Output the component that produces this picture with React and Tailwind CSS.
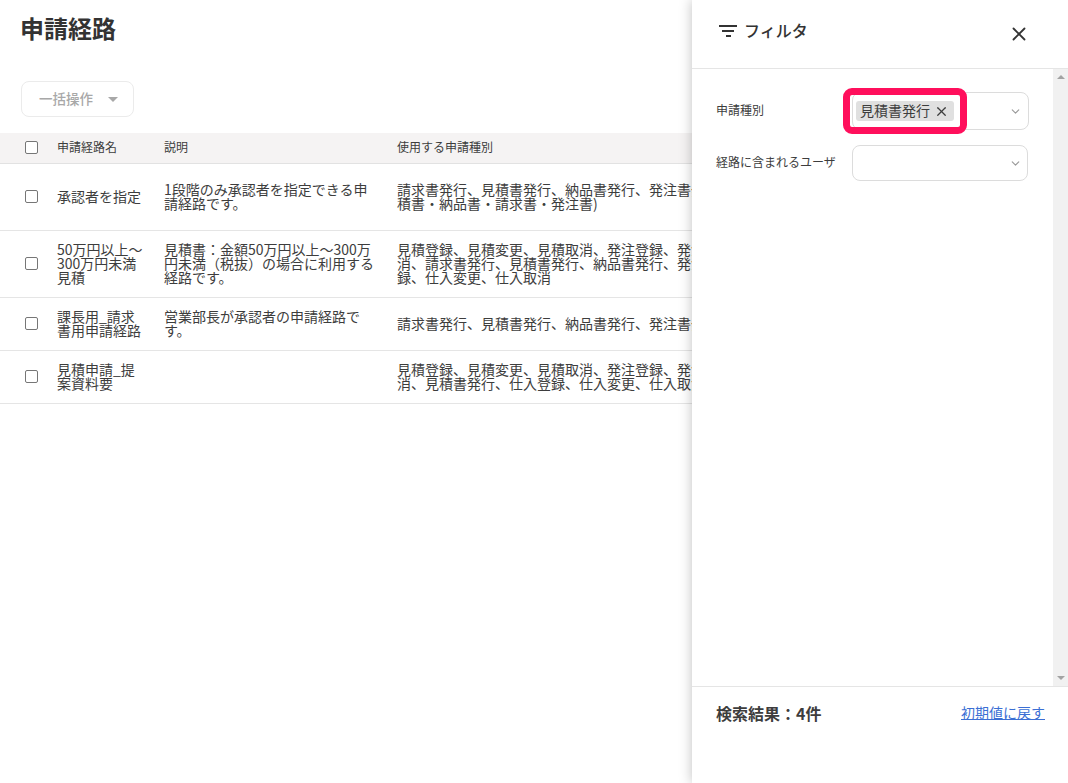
import React from 'react'
import { X, ChevronDown } from 'lucide-react'

const rows = [
  {
    h: 'h-[67px]',
    name: ['承認者を指定'],
    desc: ['1段階のみ承認者を指定できる申', '請経路です。'],
    types: ['請求書発行、見積書発行、納品書発行、発注書発行(見', '積書・納品書・請求書・発注書)'],
  },
  {
    h: 'h-[67px]',
    name: ['50万円以上～', '300万円未満', '見積'],
    desc: ['見積書：金額50万円以上～300万', '円未満（税抜）の場合に利用する', '経路です。'],
    types: ['見積登録、見積変更、見積取消、発注登録、発注変更、発注取', '消、請求書発行、見積書発行、納品書発行、発注書発行、仕入登', '録、仕入変更、仕入取消'],
  },
  {
    h: 'h-[53px]',
    name: ['課長用_請求', '書用申請経路'],
    desc: ['営業部長が承認者の申請経路で', 'す。'],
    types: ['請求書発行、見積書発行、納品書発行、発注書発行'],
  },
  {
    h: 'h-[53px]',
    name: ['見積申請_提', '案資料要'],
    desc: [],
    types: ['見積登録、見積変更、見積取消、発注登録、発注変更、発注取', '消、見積書発行、仕入登録、仕入変更、仕入取消'],
  },
]

function Lines({ lines }) {
  return lines.map((l, i) => <div key={i} className="whitespace-nowrap">{l}</div>)
}

function Checkbox() {
  return <span className="block w-[13px] h-[13px] rounded-[2px] border border-[#767676] bg-white" />
}

function FilterIcon() {
  return (
    <svg width="18" height="12" viewBox="0 0 18 12" fill="#333">
      <rect x="0" y="0" width="18" height="2" />
      <rect x="3" y="5" width="12" height="2" />
      <rect x="7" y="10" width="5" height="2" />
    </svg>
  )
}

export default function App() {
  return (
    <div className="relative h-[783px] w-full overflow-hidden bg-white text-[#3d3d3d] font-['Noto_Sans_CJK_JP','Noto_Sans',sans-serif]">
      <h1 className="pl-[20px] pt-[10px] h-[81px] text-[24px] leading-[36px] font-bold text-[#333]">申請経路</h1>

      <div className="pl-[21px] h-[52px]">
        <button className="flex items-center w-[113px] h-[36px] pl-[17px] pb-[2px] rounded-[8px] border border-[#ebebeb] text-[13.5px] font-medium text-[#a8a8a8]">
          一括操作
          <span className="ml-[15px] mt-[2px] w-0 h-0 border-x-[5px] border-x-transparent border-t-[5px] border-t-[#a8a8a8]" />
        </button>
      </div>

      {/* Table */}
      <div className="flex items-center h-[31px] bg-[#f5f3f3] border-b border-[#e2e2e2] text-[12px]">
        <div className="w-[57px] pl-[25px] shrink-0 pb-[2px]"><Checkbox /></div>
        <div className="w-[107px] shrink-0 pb-[2px]">申請経路名</div>
        <div className="w-[233px] shrink-0 pb-[2px]">説明</div>
        <div className="pb-[2px]">使用する申請種別</div>
      </div>
      {rows.map((r, i) => (
        <div key={i} className={`flex items-center ${r.h} border-b border-[#e5e5e5] text-[14px] leading-[14px]`}>
          <div className="w-[57px] pl-[25px] shrink-0 pb-[2px]"><Checkbox /></div>
          <div className="w-[107px] shrink-0 pb-[2px]"><Lines lines={r.name} /></div>
          <div className="w-[233px] shrink-0 pb-[2px]"><Lines lines={r.desc} /></div>
          <div className="pb-[2px]"><Lines lines={r.types} /></div>
        </div>
      ))}

      {/* Filter panel */}
      <aside className="absolute top-0 right-0 bottom-0 w-[376px] flex flex-col bg-white shadow-[0_0_12px_rgba(0,0,0,0.25)]">
        <div className="flex items-center h-[69px] shrink-0 border-b border-[#e5e5e5] pl-[27px] pr-[39px]">
          <span className="-mt-[6px]"><FilterIcon /></span>
          <span className="ml-[7px] -mt-[9px] text-[16px] font-medium text-[#333]">フィルタ</span>
          <X className="ml-auto -mr-[1px] text-[#333]" size={22} strokeWidth={2} />
        </div>

        <div className="flex flex-1 min-h-0">
          <div className="flex-1 pl-[24px] pr-[24px] pt-[23px]">
            <div className="flex items-center h-[38px]">
              <span className="w-[136px] shrink-0 pb-[2px] text-[12px]">申請種別</span>
              <div className="flex items-center w-[177px] h-[38px] pl-[3px] pr-[6px] rounded-[8px] border border-[#dcdcdc]">
                <span className="flex items-center w-[98px] h-[20px] pl-[4px] rounded-[3px] bg-[#e0e0e0] text-[14px]">
                  <span className="-mt-[2px]">見積書発行</span>
                  <X className="ml-[4px]" size={15} strokeWidth={2} />
                </span>
                <ChevronDown className="ml-auto text-[#999]" size={13} strokeWidth={2} />
              </div>
            </div>
            <div className="flex items-center h-[36px] mt-[15px]">
              <span className="w-[136px] shrink-0 pb-[2px] text-[12px] whitespace-nowrap">経路に含まれるユーザ</span>
              <div className="flex items-center w-[176px] h-[36px] pr-[5px] rounded-[8px] border border-[#dcdcdc]">
                <ChevronDown className="ml-auto text-[#999]" size={13} strokeWidth={2} />
              </div>
            </div>
          </div>
          <div className="flex flex-col justify-between items-center w-[16px] shrink-0 bg-[#f1f1f1] py-[6px]">
            <span className="w-0 h-0 border-x-[4px] border-x-transparent border-b-[4px] border-b-[#a3a3a3]" />
            <span className="w-0 h-0 border-x-[4px] border-x-transparent border-t-[4px] border-t-[#a3a3a3]" />
          </div>
        </div>

        <div className="flex items-start justify-between h-[97px] shrink-0 border-t border-[#e5e5e5] pl-[24px] pr-[23px] pt-[14px]">
          <span className="text-[16px] leading-[24px] font-bold">検索結果：4件</span>
          <a className="mt-[1px] text-[14px] leading-[21px] text-[#3b6fd4] underline">初期値に戻す</a>
        </div>
      </aside>

      {/* Annotation over the selected tag */}
      <div className="absolute left-[843px] top-[88px] w-[124px] h-[46px] rounded-[9px] border-[7px] border-[#ff0f5c]" />
    </div>
  )
}
